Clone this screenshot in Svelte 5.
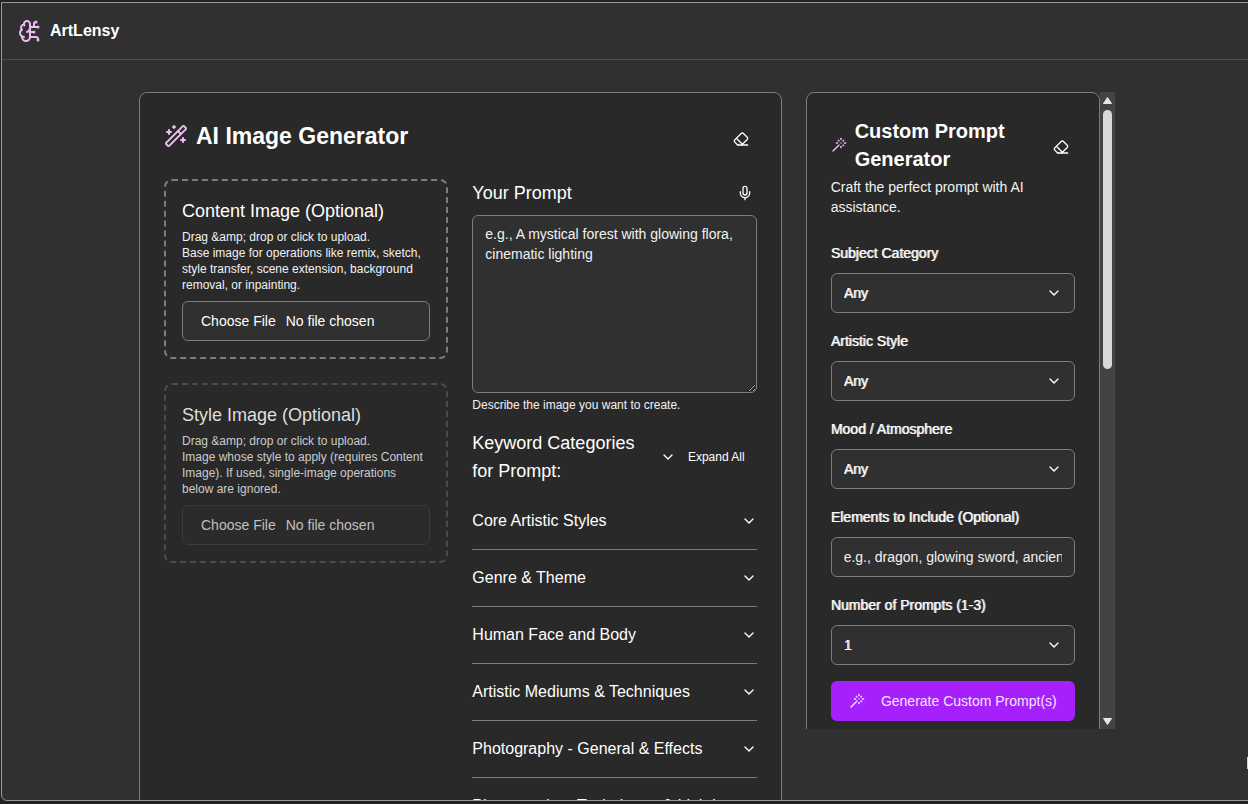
<script lang="ts">
  const categories = [
    'Core Artistic Styles',
    'Genre & Theme',
    'Human Face and Body',
    'Artistic Mediums & Techniques',
    'Photography - General & Effects',
    'Photography - Techniques & Lighting'
  ];

  const selects = [
    { id: 'subject', label: 'Subject Category', options: ['Any', 'Portrait', 'Landscape'] },
    { id: 'style', label: 'Artistic Style', options: ['Any', 'Impressionism', 'Pixel Art'] },
    { id: 'mood', label: 'Mood / Atmosphere', options: ['Any', 'Serene', 'Dramatic'] }
  ];

  let prompt = $state('');
  let elements = $state('');
  let values = $state<Record<string, string>>({ subject: 'Any', style: 'Any', mood: 'Any' });
  let count = $state('1');

  function clearCustom() {
    values = { subject: 'Any', style: 'Any', mood: 'Any' };
    elements = '';
    count = '1';
  }
</script>

{#snippet chevron()}
  <svg class="icon chevron" viewBox="0 0 24 24" aria-hidden="true"><path d="m6 9 6 6 6-6" /></svg>
{/snippet}

{#snippet eraser()}
  <svg class="icon" viewBox="0 0 24 24" aria-hidden="true">
    <path d="m7 21-4.3-4.3c-1-1-1-2.5 0-3.4l9.6-9.6c1-1 2.5-1 3.4 0l5.6 5.6c1 1 1 2.5 0 3.4L13 21" />
    <path d="M22 21H7" />
    <path d="m5 11 9 9" />
  </svg>
{/snippet}

{#snippet wand()}
  <svg class="icon wand" viewBox="0 0 24 24" aria-hidden="true">
    <path d="M15 4V2" />
    <path d="M15 16v-2" />
    <path d="M8 9h2" />
    <path d="M20 9h2" />
    <path d="M17.8 11.8 19 13" />
    <path d="M15 9h.01" />
    <path d="M17.8 6.2 19 5" />
    <path d="m3 21 9-9" />
    <path d="M12.2 6.2 11 5" />
  </svg>
{/snippet}

<div class="shell">
  <div class="frame">
    <header class="topbar">
      <a class="brand" href="/">
        <svg class="icon large" viewBox="0 0 24 24" aria-hidden="true">
          <path d="M12 5a3 3 0 1 0-5.997.125 4 4 0 0 0-2.526 5.77 4 4 0 0 0 .556 6.588A4 4 0 1 0 12 18Z" />
          <path d="M9 13a4.5 4.5 0 0 0 3-4" />
          <path d="M6.003 5.125A3 3 0 0 0 6.401 6.5" />
          <path d="M3.477 10.896a4 4 0 0 1 .585-.396" />
          <path d="M6 18a4 4 0 0 1-1.967-.516" />
          <path d="M12 13h4" />
          <path d="M12 18h6a2 2 0 0 1 2 2v1" />
          <path d="M12 8h8" />
          <path d="M16 8V5a2 2 0 0 1 2-2" />
          <circle cx="16" cy="13" r=".5" />
          <circle cx="18" cy="3" r=".5" />
          <circle cx="20" cy="21" r=".5" />
          <circle cx="20" cy="8" r=".5" />
        </svg>
        <span>ArtLensy</span>
      </a>
    </header>

    <main class="layout">
      <section class="card generator">
        <div class="card-header">
          <h1>
            <svg class="icon large" viewBox="0 0 24 24" aria-hidden="true">
              <path d="m21.64 3.64-1.28-1.28a1.21 1.21 0 0 0-1.72 0L2.36 18.64a1.21 1.21 0 0 0 0 1.72l1.28 1.28a1.2 1.2 0 0 0 1.72 0L21.64 5.36a1.2 1.2 0 0 0 0-1.72" />
              <path d="m14 7 3 3" />
              <path d="M5 6v4" />
              <path d="M19 14v4" />
              <path d="M10 2v2" />
              <path d="M7 8H3" />
              <path d="M21 16h-4" />
              <path d="M11 3H9" />
            </svg>
            AI Image Generator
          </h1>
          <button type="button" class="icon-button" aria-label="Clear prompt" onclick={() => (prompt = '')}>
            {@render eraser()}
          </button>
        </div>

        <div class="columns">
          <div class="uploads">
            <div class="upload">
              <label for="content-image">Content Image (Optional)</label>
              <p>Drag &amp;amp; drop or click to upload.<br />Base image for operations like remix, sketch, style transfer, scene extension, background removal, or inpainting.</p>
              <input id="content-image" type="file" accept="image/*" />
            </div>
            <div class="upload inactive">
              <label for="style-image">Style Image (Optional)</label>
              <p>Drag &amp;amp; drop or click to upload.<br />Image whose style to apply (requires Content Image). If used, single-image operations below are ignored.</p>
              <input id="style-image" type="file" accept="image/*" disabled />
            </div>
          </div>

          <div class="prompt">
            <div class="prompt-head">
              <label for="prompt">Your Prompt</label>
              <button type="button" class="mic" aria-label="Dictate prompt">
                <svg class="icon" viewBox="0 0 24 24" aria-hidden="true">
                  <path d="M12 2a3 3 0 0 0-3 3v7a3 3 0 0 0 6 0V5a3 3 0 0 0-3-3Z" />
                  <path d="M19 10v2a7 7 0 0 1-14 0v-2" />
                  <path d="M12 19v3" />
                </svg>
              </button>
            </div>
            <textarea
              id="prompt"
              bind:value={prompt}
              placeholder="e.g., A mystical forest with glowing flora, cinematic lighting"
            ></textarea>
            <p class="hint">Describe the image you want to create.</p>

            <div class="keywords-head">
              <h2>Keyword Categories for Prompt:</h2>
              <button type="button" class="expand">{@render chevron()} Expand All</button>
            </div>
            {#each categories as category}
              <button type="button" class="category">
                {category}
                {@render chevron()}
              </button>
            {/each}
          </div>
        </div>
      </section>

      <aside class="side">
        <div class="card custom">
          <div class="custom-header">
            {@render wand()}
            <h2>Custom Prompt Generator</h2>
            <button type="button" class="icon-button" aria-label="Clear custom prompt" onclick={clearCustom}>
              {@render eraser()}
            </button>
          </div>
          <p class="lead">Craft the perfect prompt with AI assistance.</p>

          <div class="fields">
            {#each selects as field}
              <div class="field">
                <label for={field.id}>{field.label}</label>
                <div class="select strong">
                  <select id={field.id} bind:value={values[field.id]}>
                    {#each field.options as option}
                      <option>{option}</option>
                    {/each}
                  </select>
                  {@render chevron()}
                </div>
              </div>
            {/each}
            <div class="field">
              <label for="elements">Elements to Include (Optional)</label>
              <input id="elements" type="text" bind:value={elements} placeholder="e.g., dragon, glowing sword, ancient ruins" />
            </div>
            <div class="field">
              <label for="count">Number of Prompts (1-3)</label>
              <div class="select strong">
                <select id="count" bind:value={count}>
                  <option>1</option>
                  <option>2</option>
                  <option>3</option>
                </select>
                {@render chevron()}
              </div>
            </div>
            <button type="button" class="primary">
              {@render wand()}
              Generate Custom Prompt(s)
            </button>
          </div>
        </div>
        <div class="scrollbar" aria-hidden="true">
          <svg viewBox="0 0 9 7"><path d="M4.5 0.5 8.5 6.5h-8z" /></svg>
          <div class="track"><div class="thumb"></div></div>
          <svg viewBox="0 0 9 7"><path d="M4.5 6.5 8.5 0.5h-8z" /></svg>
        </div>
      </aside>
    </main>
  </div>
  <span class="edge-tab"></span>
</div>

<style>
  :global(body) {
    background: #232122;
  }
  .shell {
    --page: #303030;
    --card: #292929;
    --line: #7c7c7c;
    --text: #ffffff;
    --accent: #f3b8f7;
    position: relative;
    box-sizing: border-box;
    height: 100vh;
    padding: 2px 0 3px 1px;
    overflow: hidden;
    color: var(--text);
    font-family: "Liberation Sans", Arial, sans-serif;
    font-size: 14px;
    line-height: 20px;
  }
  .shell *,
  .shell *::before {
    box-sizing: border-box;
  }
  /* the window frame runs past the right edge */
  .frame {
    width: calc(100% + 5px);
    height: 100%;
    overflow: hidden;
    background: var(--page);
    border: 1px solid #9a9a9a;
    border-radius: 0 0 6px 6px;
  }
  h1,
  h2,
  p {
    margin: 0;
  }
  button,
  input,
  select,
  textarea {
    font: inherit;
    color: inherit;
  }
  button {
    padding: 0;
    border: none;
    background: none;
    cursor: pointer;
  }
  .icon {
    flex: none;
    width: 16px;
    height: 16px;
    fill: none;
    stroke: currentColor;
    stroke-width: 2;
    stroke-linecap: round;
    stroke-linejoin: round;
  }
  .icon.large {
    width: 24px;
    height: 24px;
    color: var(--accent);
  }

  .topbar {
    display: flex;
    align-items: center;
    height: 57px;
    padding: 0 16px;
    border-bottom: 1px solid #4c4c4c;
  }
  .brand {
    display: flex;
    align-items: center;
    gap: 8px;
    color: var(--text);
    font-size: 16px;
    font-weight: 700;
    text-decoration: none;
  }

  .layout {
    display: grid;
    grid-template-columns: repeat(12, minmax(0, 1fr));
    align-items: start;
    gap: 24px;
    max-width: 1024px;
    margin: 0 auto;
    padding: 32px 24px;
  }
  .card {
    padding: 24px;
    background: var(--card);
    border: 1px solid var(--line);
    border-radius: 8px;
  }
  .generator {
    grid-column: span 8;
  }
  .card-header {
    display: flex;
    justify-content: space-between;
    align-items: flex-end;
    min-height: 38px;
    margin-bottom: 24px;
  }
  h1 {
    display: flex;
    align-items: center;
    align-self: center;
    gap: 8px;
    font-size: 23px;
    line-height: 32px;
    font-weight: 700;
  }
  .icon-button {
    display: grid;
    place-items: center;
    width: 32px;
    height: 32px;
  }
  .columns {
    display: grid;
    grid-template-columns: repeat(2, minmax(0, 1fr));
    gap: 24px;
  }
  .uploads {
    display: flex;
    flex-direction: column;
    gap: 24px;
  }
  .upload {
    padding: 16px;
    border: 2px dashed #7c7c7c;
    border-radius: 8px;
  }
  .upload label,
  .prompt-head label,
  .keywords-head h2 {
    display: block;
    font-size: 18px;
    line-height: 28px;
    font-weight: 500;
  }
  .upload p {
    margin: 4px 0 8px;
    color: #f2f2f2;
    font-size: 12px;
    line-height: 16px;
  }
  .upload input {
    display: block;
    width: 100%;
    height: 40px;
    padding: 9px 12px;
    background: var(--page);
    border: 1px solid var(--line);
    border-radius: 6px;
  }
  .upload input::file-selector-button {
    margin: 0 4px 0 0;
    padding: 0 6px;
    border: 0;
    background: transparent;
    color: inherit;
    font: inherit;
  }
  .upload.inactive {
    border-color: #4b4b4b;
  }
  .inactive label {
    color: #dedede;
  }
  .inactive p {
    color: #cccccc;
  }
  .inactive input {
    color: #c0c0c0;
    background: #2b2b2b;
    border-color: #3b3b3b;
  }

  .prompt {
    display: flex;
    flex-direction: column;
  }
  .prompt-head {
    display: flex;
    justify-content: space-between;
    align-items: center;
    margin-bottom: 8px;
  }
  .mic {
    display: grid;
    place-items: center;
    width: 24px;
    height: 24px;
  }
  textarea {
    display: block;
    width: 100%;
    height: 178px;
    margin: 0;
    padding: 8px 12px;
    background: var(--page);
    border: 1px solid var(--line);
    border-radius: 6px;
    resize: vertical;
  }
  textarea::placeholder,
  input::placeholder {
    color: #f2f2f2;
    opacity: 1;
  }
  .hint {
    margin: 4px 0 16px;
    color: #f2f2f2;
    font-size: 12px;
    line-height: 16px;
  }
  .keywords-head {
    display: flex;
    justify-content: space-between;
    align-items: center;
    gap: 24px;
    padding-right: 12px;
    margin-bottom: 8px;
  }
  .expand {
    display: flex;
    align-items: center;
    gap: 12px;
    font-size: 12px;
    white-space: nowrap;
  }
  .category {
    display: flex;
    justify-content: space-between;
    align-items: center;
    padding: 16px 0;
    border-bottom: 1px solid var(--line);
    font-size: 16px;
    line-height: 24px;
    text-align: left;
  }

  .side {
    grid-column: span 4;
    display: flex;
    height: calc(100vh - 167px);
    overflow: hidden;
  }
  .custom {
    flex: 1;
    min-width: 0;
    height: max-content;
  }
  .custom-header {
    display: flex;
    align-items: center;
    gap: 8px;
  }
  .custom-header .wand {
    color: var(--accent);
  }
  .custom-header h2 {
    flex: 1;
    font-size: 20px;
    line-height: 28px;
    font-weight: 700;
  }
  .custom-header .icon-button {
    width: 28px;
    height: 20px;
    align-items: end;
  }
  .lead {
    margin: 4px 0 24px;
    color: #f2f2f2;
  }
  .fields {
    display: flex;
    flex-direction: column;
    gap: 16px;
  }
  .field label {
    display: block;
    margin-bottom: 8px;
    line-height: 24px;
  }
  /* medium weight: regular widths with thicker stems */
  .field label,
  .strong select {
    text-shadow: 1px 0 rgb(255 255 255 / 70%);
  }
  .select {
    position: relative;
  }
  .select .chevron {
    position: absolute;
    top: 12px;
    right: 13px;
    pointer-events: none;
  }
  .field select,
  .field input {
    display: block;
    width: 100%;
    height: 40px;
    margin: 0;
    padding: 0 12px;
    background: var(--page);
    border: 1px solid var(--line);
    border-radius: 6px;
    appearance: none;
  }
  .primary {
    display: flex;
    justify-content: center;
    align-items: center;
    gap: 16px;
    height: 40px;
    background: #a620fb;
    border-radius: 6px;
    color: #f6e4ff;
  }

  .scrollbar {
    flex: none;
    display: flex;
    flex-direction: column;
    align-items: center;
    width: 15px;
    padding: 5px 0 4px;
    background: #434343;
  }
  .scrollbar svg {
    flex: none;
    width: 9px;
    height: 7px;
    fill: #e6e6e6;
    stroke: #e6e6e6;
    stroke-linejoin: round;
  }
  .track {
    flex: 1;
    width: 9px;
    margin: 6px 0;
  }
  .thumb {
    height: 43%;
    background: #d8d8d8;
    border-radius: 5px;
  }
  .edge-tab {
    position: absolute;
    right: 0;
    bottom: 35px;
    width: 1px;
    height: 12px;
    background: #f0cf96;
  }
</style>
